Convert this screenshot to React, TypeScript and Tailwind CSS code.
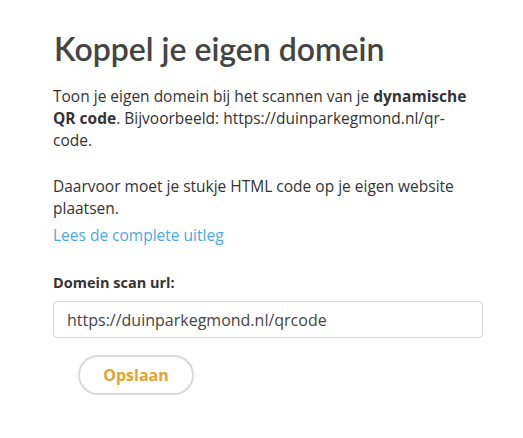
export default function App() {
  return (
    <div className="min-h-screen bg-white pl-[53px] pr-[40px] pt-[30px]" style={{ fontFamily: '"Open Sans", sans-serif' }}>
      <div className="w-[430px]">
        <h1
          className="text-[32px] leading-[38px] font-semibold text-[#444444] pl-[1px]"
          style={{ fontFamily: 'Lato, sans-serif' }}
        >
          Koppel je eigen domein
        </h1>
        <p className="mt-[17px] text-[15.5px] leading-[22px] text-[#333333]">
          Toon je eigen domein bij het scannen van je <strong className="font-bold">dynamische QR code</strong>.
          Bijvoorbeeld: https://duinparkegmond.nl/qr-code.
        </p>
        <p className="mt-[24px] text-[15.5px] leading-[22px] text-[#333333]">
          Daarvoor moet je stukje HTML code op je eigen website plaatsen.
        </p>
        <a href="#" className="block mt-[5px] text-[15.5px] leading-[22px] text-[#4aa8e2]">
          Lees de complete uitleg
        </a>
        <label className="block mt-[26px] text-[14.5px] leading-[22px] font-bold text-[#333333]">
          Domein scan url:
        </label>
        <input
          type="text"
          defaultValue="https://duinparkegmond.nl/qrcode"
          className="mt-[7px] block w-full h-[37px] rounded-[4px] border border-[#d6d6d6] px-[13px] text-[16px] text-[#444444] outline-none"
        />
        <button className="mt-[17px] ml-[25px] w-[116px] h-[40px] rounded-full border-2 border-[#dadada] bg-white text-[16px] font-bold text-[#e6a42c]">
          Opslaan
        </button>
      </div>
    </div>
  )
}
